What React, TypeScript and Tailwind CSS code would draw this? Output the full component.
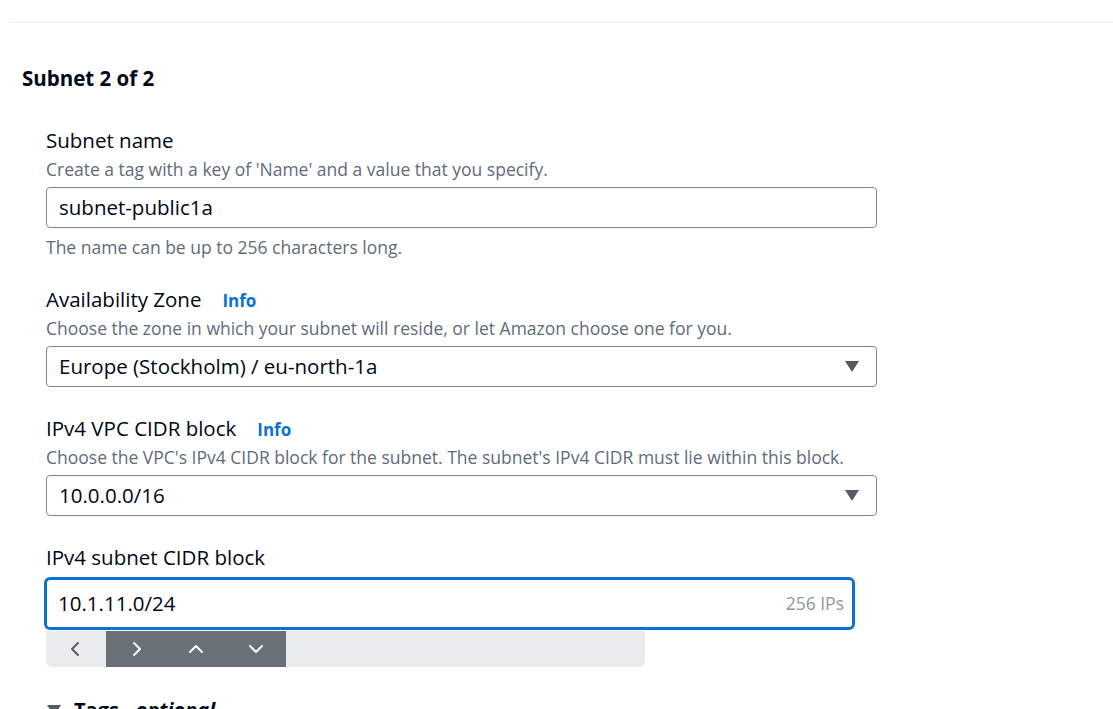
import React from 'react';

const Caret: React.FC = () => (
  <svg width="16" height="13" viewBox="0 0 16 13" className="shrink-0">
    <path d="M1 1 H15 L8 12 Z" fill="#545b64" />
  </svg>
);

const Chevron: React.FC<{ dir: 'left' | 'right' | 'up' | 'down'; color: string }> = ({ dir, color }) => {
  const d = {
    left: 'M10 2 L4 8 L10 14',
    right: 'M6 2 L12 8 L6 14',
    up: 'M2 11 L8 5 L14 11',
    down: 'M2 5 L8 11 L14 5',
  }[dir];
  return (
    <svg width="16" height="16" viewBox="0 0 16 16">
      <path d={d} fill="none" stroke={color} strokeWidth="2" strokeLinecap="round" strokeLinejoin="round" />
    </svg>
  );
};

const Label: React.FC<{ text: string; info?: boolean }> = ({ text, info }) => (
  <div className="flex items-center h-[28px] text-[20.5px] text-[#000716]">
    <span>{text}</span>
    {info && <span className="ml-[21px] mt-[3px] text-[17px] font-bold text-[#0972d3]">Info</span>}
  </div>
);

const Desc: React.FC<{ text: string }> = ({ text }) => (
  <p className="mt-[3px] leading-[24px] text-[17.5px] text-[#5f6b7a] whitespace-nowrap">{text}</p>
);

const Select: React.FC<{ value: string }> = ({ value }) => (
  <div className="mt-[6px] flex items-center justify-between h-[41px] w-[831px] rounded-[4px] border border-[#7d8998] pl-[12px] pr-[16px] text-[20.5px] text-[#000716]">
    <span>{value}</span>
    <Caret />
  </div>
);

export default function App() {
  return (
    <div className="min-h-screen bg-white pt-[22px] font-['Open_Sans',sans-serif] text-[#000716] overflow-hidden">
      <div className="ml-[10px] border-t border-[#e9ebed]" />

      <h2 className="ml-[22px] mt-[42px] leading-[26px] text-[20.5px] font-bold">Subnet 2 of 2</h2>

      <div className="ml-[46px] mt-[35px]">
        {/* Subnet name */}
        <Label text="Subnet name" />
        <Desc text="Create a tag with a key of 'Name' and a value that you specify." />
        <div className="mt-[6px] flex items-center h-[41px] w-[831px] rounded-[4px] border border-[#7d8998] pl-[12px] text-[20.5px]">
          subnet-public1a
        </div>
        <p className="mt-[7px] leading-[24px] text-[17.5px] text-[#5f6b7a]">The name can be up to 256 characters long.</p>

        {/* Availability zone */}
        <div className="mt-[26px]">
          <Label text="Availability Zone" info />
          <Desc text="Choose the zone in which your subnet will reside, or let Amazon choose one for you." />
          <Select value="Europe (Stockholm) / eu-north-1a" />
        </div>

        {/* VPC CIDR */}
        <div className="mt-[27px]">
          <Label text="IPv4 VPC CIDR block" info />
          <Desc text="Choose the VPC's IPv4 CIDR block for the subnet. The subnet's IPv4 CIDR must lie within this block." />
          <Select value="10.0.0.0/16" />
        </div>

        {/* Subnet CIDR */}
        <div className="mt-[27px]">
          <Label text="IPv4 subnet CIDR block" />
          <div className="mt-[6px] -ml-[2px] flex items-center justify-between h-[53px] w-[811px] rounded-[6px] border-[3px] border-[#0972d3] pl-[11px] pr-[8px] text-[20.5px]">
            <span>10.1.11.0/24</span>
            <span className="text-[17.5px] text-[#8d9999]">256 IPs</span>
          </div>
          <div className="mt-[1px] flex h-[36px] w-[599px] rounded-b-[6px] bg-[#e9ebed] overflow-hidden">
            <div className="flex w-[60px] items-center justify-center">
              <Chevron dir="left" color="#545b64" />
            </div>
            <div className="flex bg-[#687078]">
              <div className="flex w-[60px] items-center justify-center">
                <Chevron dir="right" color="#ffffff" />
              </div>
              <div className="flex w-[60px] items-center justify-center">
                <Chevron dir="up" color="#ffffff" />
              </div>
              <div className="flex w-[60px] items-center justify-center">
                <Chevron dir="down" color="#ffffff" />
              </div>
            </div>
          </div>
        </div>

        {/* Tags */}
        <div className="mt-[31px] flex items-center gap-[12px] h-[24px] text-[20px] font-bold">
          <Caret />
          <span>
            Tags - <i>optional</i>
          </span>
        </div>
      </div>
    </div>
  );
}
